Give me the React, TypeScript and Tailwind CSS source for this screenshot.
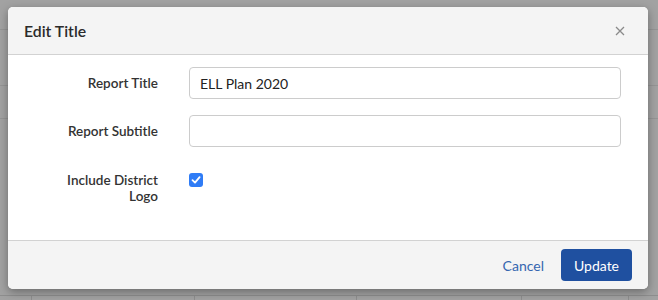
import React from "react";

export default function App() {
  const font = { fontFamily: "Lato, 'Open Sans', 'Liberation Sans', sans-serif" };
  return (
    <div className="relative w-[658px] h-[300px] overflow-hidden bg-[#a2a2a2]" style={font}>
      {/* underlying page (dimmed) */}
      <div className="absolute inset-0">
        <div className="h-[30px] border-b border-[#959595]" />
        <div className="h-[56px] border-b border-[#959595]" />
        <div className="h-[33px] border-b border-[#959595]" />
        <div className="h-[177px] border-b border-[#8e8e8e]" />
        <div className="flex h-[10px] pl-[31px]">
          <div className="w-[163px] border-l border-[#8e8e8e]" />
          <div className="w-[162px] border-l border-[#8e8e8e]" />
          <div className="w-[165px] border-l border-[#8e8e8e]" />
          <div className="w-[107px] border-l border-[#8e8e8e]" />
          <div className="flex-1 border-l border-[#8e8e8e]" />
        </div>
      </div>

      {/* modal */}
      <div className="absolute left-[8px] top-[7px] w-[640px] h-[282px] rounded-[5px] bg-white shadow-[0_3px_10px_rgba(0,0,0,0.35)] overflow-hidden flex flex-col">
        <div className="h-[48px] bg-[#f4f4f4] border-b border-[#d2d2d2] flex items-center justify-between pl-[16px] pr-[23px]">
          <span className="text-[15.8px] font-semibold text-[#2b2b2b]">Edit Title</span>
          <svg width="10" height="10" viewBox="0 0 10 10">
            <path d="M1 1 L9 9 M9 1 L1 9" stroke="#8a8a8a" strokeWidth="1.3" />
          </svg>
        </div>
        <div className="flex-1 flex flex-col pt-[12px] gap-[16px]">
          <div className="flex items-center">
            <div className="w-[150px] text-right text-[13.5px] font-semibold text-[#333]">Report Title</div>
            <div className="ml-[31px] w-[432px] h-[32px] border border-[#cccccc] rounded-[4px] flex items-center px-[10px] text-[14px] text-[#222]">
              ELL Plan 2020
            </div>
          </div>
          <div className="flex items-center">
            <div className="w-[150px] text-right text-[13.5px] font-semibold text-[#333]">Report Subtitle</div>
            <div className="ml-[31px] w-[432px] h-[32px] border border-[#cccccc] rounded-[4px]" />
          </div>
          <div className="flex items-start pt-[9px]">
            <div className="w-[150px] flex justify-end">
              <div className="w-[100px] text-right text-[13.5px] font-semibold text-[#333] leading-[16px]">
                Include District Logo
              </div>
            </div>
            <div className="ml-[31px] mt-[1px] w-[14px] h-[14px] rounded-[3px] bg-[#2f7cf6] flex items-center justify-center">
              <svg width="10" height="10" viewBox="0 0 10 10">
                <path d="M1.5 5.2 L4 7.6 L8.6 2.2" stroke="white" strokeWidth="1.8" fill="none" strokeLinecap="round" strokeLinejoin="round" />
              </svg>
            </div>
          </div>
        </div>
        <div className="h-[49px] bg-[#f4f4f4] border-t border-[#d2d2d2] flex items-center justify-end pr-[16px] gap-[17px]">
          <span className="text-[14px] text-[#3566b0]">Cancel</span>
          <div className="w-[71px] h-[32px] rounded-[4px] bg-[#1f50a0] text-white text-[14px] flex items-center justify-center">
            Update
          </div>
        </div>
      </div>
    </div>
  );
}
